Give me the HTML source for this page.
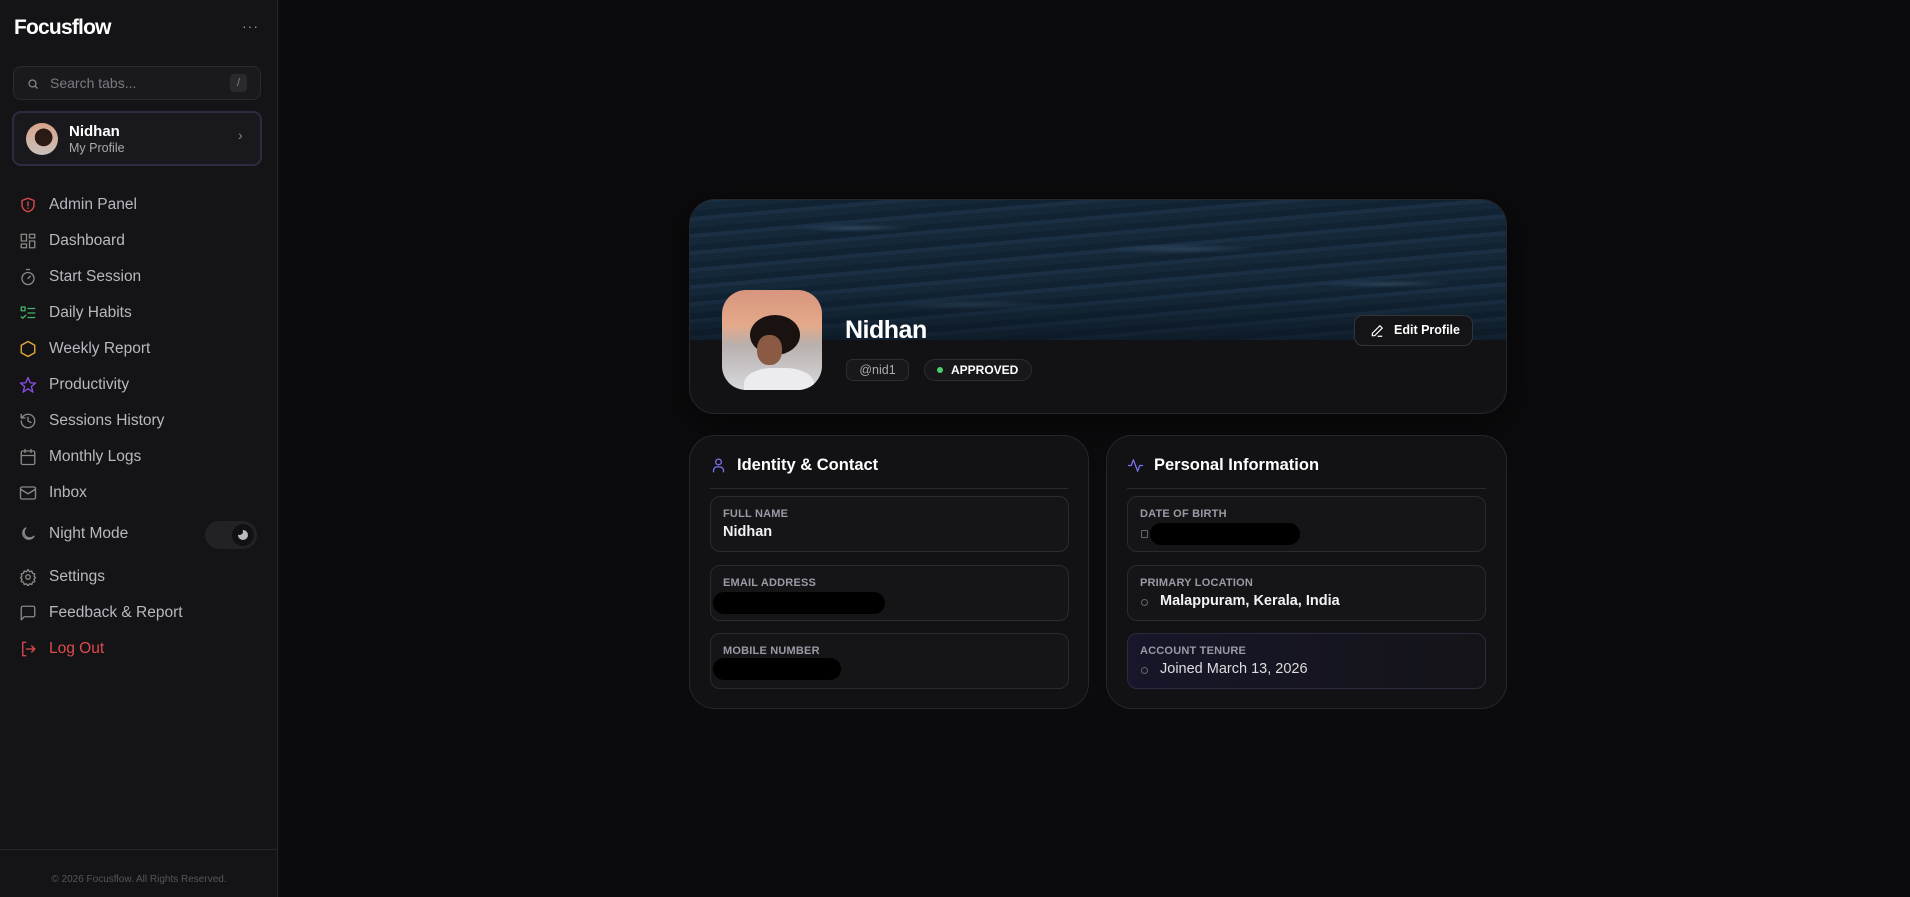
<!DOCTYPE html>
<html><head><meta charset="utf-8"><style>
*{margin:0;padding:0;box-sizing:border-box}
body{width:1910px;height:897px;background:#0b0b0d;font-family:"Liberation Sans",sans-serif;position:relative;overflow:hidden;color:#fff}
.a{position:absolute}
.sb{left:0;top:0;width:278px;height:897px;background:#141416;border-right:1px solid #25252a}
.nav{position:absolute;left:19px;height:30px;display:flex;align-items:center;font-size:15.5px;color:#b8b8c0}
.nav svg{width:18px;height:18px;margin-right:12px;fill:none;stroke-width:1.8;stroke-linecap:round;stroke-linejoin:round}
.card{position:absolute;background:#121215;border:1px solid #26262c;border-radius:26px}
.field{position:absolute;left:20px;width:359px;height:56px;background:#151518;border:1px solid #2a2a30;border-radius:10px}
.lbl{position:absolute;left:12px;top:11px;font-size:11px;font-weight:bold;color:#9a9aa6;letter-spacing:.2px}
.val{position:absolute;left:12px;top:27px;font-size:14.5px;font-weight:bold;color:#f2f2f5}
.red{position:absolute;background:#000;border-radius:12px}
.hd{position:absolute;left:20px;top:20px;display:flex;align-items:center;font-size:16.5px;font-weight:bold}
.hd svg{width:17px;height:17px;margin-right:10px;fill:none;stroke:#7b72f0;stroke-width:1.8;stroke-linecap:round;stroke-linejoin:round}
.dv{position:absolute;left:20px;right:20px;top:52px;height:1px;background:#2a2a30}
</style></head><body>
<div class="a sb">
 <div class="a" style="left:14px;top:16px;font-size:21px;font-weight:bold;letter-spacing:-.8px">Focusflow</div>
 <div class="a" style="left:242px;top:18px;color:#999;font-size:14px;letter-spacing:1px">···</div>
 <div class="a" style="left:13px;top:66px;width:248px;height:34px;background:#1a1a1d;border:1px solid #2a2a2f;border-radius:8px">
  <svg class="a" style="left:13px;top:11px" width="12" height="12" viewBox="0 0 24 24" fill="none" stroke="#888" stroke-width="2.5"><circle cx="11" cy="11" r="7"/><path d="M16 16l5 5"/></svg>
  <div class="a" style="left:36px;top:8px;font-size:14px;color:#7a7a82">Search tabs...</div>
  <div class="a" style="left:216px;top:7px;width:17px;height:18px;background:#2a2a2e;border-radius:4px;color:#888;font-size:11px;text-align:center;line-height:18px">/</div>
 </div>
 <div class="a" style="left:12px;top:111px;width:250px;height:55px;background:#19191d;border:2px solid #2c2c40;border-radius:9px">
  <div class="a" style="left:12px;top:10px;width:32px;height:32px;border-radius:50%;background:radial-gradient(circle at 55% 45%,#2a1a15 0 35%,transparent 36%),linear-gradient(#d9a38a,#c8c0bc)"></div>
  <div class="a" style="left:55px;top:10px;font-size:15px;font-weight:bold">Nidhan</div>
  <div class="a" style="left:55px;top:28px;font-size:12.5px;color:#aaa">My Profile</div>
  <div class="a" style="left:224px;top:14px;color:#888;font-size:14px">›</div>
 </div>
 <div class="nav" style="top:190px"><svg viewBox="0 0 24 24" stroke="#e04b4b"><path d="M12 3l8 3v6c0 5-4 8-8 9-4-1-8-4-8-9V6z"/><path d="M12 8v5M12 16v.5"/></svg>Admin Panel</div>
 <div class="nav" style="top:226px"><svg viewBox="0 0 24 24" stroke="#888"><rect x="3" y="3" width="7" height="9"/><rect x="14" y="3" width="7" height="5"/><rect x="14" y="12" width="7" height="9"/><rect x="3" y="16" width="7" height="5"/></svg>Dashboard</div>
 <div class="nav" style="top:262px"><svg viewBox="0 0 24 24" stroke="#888"><circle cx="12" cy="14" r="8"/><path d="M10 2h4M12 14l3-3"/></svg>Start Session</div>
 <div class="nav" style="top:298px"><svg viewBox="0 0 24 24" stroke="#3fb46a"><rect x="3" y="4" width="5" height="5"/><path d="M3 17l2 2 4-4M12 6h9M12 12h9M12 18h9"/></svg>Daily Habits</div>
 <div class="nav" style="top:334px"><svg viewBox="0 0 24 24" stroke="#e8a93a"><path d="M12 2l9 5v10l-9 5-9-5V7z"/></svg>Weekly Report</div>
 <div class="nav" style="top:370px"><svg viewBox="0 0 24 24" stroke="#8c4ee8"><path d="M12 2l3 7 7 .5-5.5 4.5 2 7.5L12 17l-6.5 4.5 2-7.5L2 9.5 9 9z"/></svg>Productivity</div>
 <div class="nav" style="top:406px"><svg viewBox="0 0 24 24" stroke="#888"><path d="M3 12a9 9 0 1 0 3-6.7L3 8M3 3v5h5M12 7v5l4 2"/></svg>Sessions History</div>
 <div class="nav" style="top:442px"><svg viewBox="0 0 24 24" stroke="#888"><rect x="3" y="4" width="18" height="18" rx="2"/><path d="M16 2v4M8 2v4M3 10h18"/></svg>Monthly Logs</div>
 <div class="nav" style="top:478px"><svg viewBox="0 0 24 24" stroke="#888"><rect x="2" y="4" width="20" height="16" rx="2"/><path d="M22 7l-10 6L2 7"/></svg>Inbox</div>
 <div class="nav" style="top:519px"><svg viewBox="0 0 24 24" stroke="#888"><path d="M20 15A8 8 0 1 1 9 4a7 7 0 0 0 11 11z"/></svg>Night Mode</div>
 <div class="a" style="left:205px;top:521px;width:52px;height:28px;border-radius:14px;background:#222226"><div class="a" style="left:27px;top:3px;width:22px;height:22px;border-radius:50%;background:#111114"><div class="a" style="left:6px;top:6px;width:10px;height:10px;border-radius:50%;background:#bbb"></div><div class="a" style="left:4px;top:4px;width:7px;height:7px;border-radius:50%;background:#111114"></div></div></div>
 <div class="nav" style="top:562px"><svg viewBox="0 0 24 24" stroke="#888"><circle cx="12" cy="12" r="3"/><path d="M12 2l2 3 3-1 1 3 3 1-1 3 2 2-2 2 1 3-3 1-1 3-3-1-2 3-2-3-3 1-1-3-3-1 1-3-2-2 2-2-1-3 3-1 1-3 3 1z"/></svg>Settings</div>
 <div class="nav" style="top:598px"><svg viewBox="0 0 24 24" stroke="#888"><path d="M21 15a2 2 0 0 1-2 2H7l-4 4V5a2 2 0 0 1 2-2h14a2 2 0 0 1 2 2z"/></svg>Feedback &amp; Report</div>
 <div class="nav" style="top:634px;color:#e04b4b"><svg viewBox="0 0 24 24" stroke="#e04b4b"><path d="M9 3H5v18h4M10 12h11M17 8l4 4-4 4"/></svg>Log Out</div>
 <div class="a" style="left:0;top:849px;width:278px;height:1px;background:#25252a"></div>
 <div class="a" style="left:0;top:874px;width:278px;text-align:center;font-size:10px;color:#55555c">© 2026 Focusflow. All Rights Reserved.</div>
</div>

<div class="card" style="left:689px;top:199px;width:818px;height:215px;overflow:hidden;box-shadow:0 10px 40px rgba(0,0,0,.5)">
 <div class="a" style="left:0;top:0;width:818px;height:140px;background:
  radial-gradient(ellipse 60px 4px at 20% 20%,rgba(90,120,150,.35),transparent),
  radial-gradient(ellipse 80px 5px at 60% 35%,rgba(90,120,150,.3),transparent),
  radial-gradient(ellipse 70px 4px at 85% 60%,rgba(90,120,150,.3),transparent),
  radial-gradient(ellipse 90px 5px at 35% 75%,rgba(90,120,150,.25),transparent),
  repeating-linear-gradient(175deg,#1a2f44 0 4px,#152839 4px 11px,#112233 11px 17px),#14283a"></div>
 <div class="a" style="left:0;top:90px;width:818px;height:50px;background:linear-gradient(transparent,rgba(10,20,30,.55))"></div>
</div>
<div class="a" style="left:722px;top:290px;width:100px;height:100px;border-radius:24px;overflow:hidden;background:linear-gradient(#d7957d 0%,#e5a98a 35%,#b8b0ad 55%,#d8d8dc 100%)">
 <div class="a" style="left:28px;top:25px;width:50px;height:40px;border-radius:50%;background:#1a1210"></div>
 <div class="a" style="left:35px;top:45px;width:25px;height:30px;border-radius:45%;background:#8a5a44"></div>
 <div class="a" style="left:22px;top:78px;width:70px;height:40px;border-radius:40%;background:#ecebee"></div>
</div>
<div class="a" style="left:845px;top:316px;font-size:25px;font-weight:bold;letter-spacing:-.5px">Nidhan</div>
<div class="a" style="left:846px;top:359px;width:63px;height:22px;border:1px solid #2c2c32;background:#18181c;border-radius:7px;font-size:12.5px;color:#aaa;text-align:center;line-height:20px">@nid1</div>
<div class="a" style="left:924px;top:359px;width:108px;height:22px;border:1px solid #2c2c32;background:#18181c;border-radius:11px;font-size:12px;font-weight:bold;line-height:20px;padding-left:26px">APPROVED<div class="a" style="left:12px;top:7px;width:6px;height:6px;border-radius:50%;background:#4ccf6c"></div></div>
<div class="a" style="left:1354px;top:315px;width:119px;height:31px;border:1px solid #34343a;background:#141417;border-radius:9px;font-size:12.5px;font-weight:bold;line-height:29px;padding-left:39px">Edit Profile
 <svg class="a" style="left:15px;top:8px" width="14" height="14" viewBox="0 0 24 24" fill="none" stroke="#fff" stroke-width="2"><path d="M17 3l4 4L8 20H4v-4zM13 21h8"/></svg></div>

<div class="card" style="left:689px;top:435px;width:400px;height:274px">
 <div class="hd"><svg viewBox="0 0 24 24"><circle cx="12" cy="7" r="4"/><path d="M5 21v-2a5 5 0 0 1 5-5h4a5 5 0 0 1 5 5v2"/></svg>Identity &amp; Contact</div>
 <div class="dv"></div>
 <div class="field" style="top:60px"><div class="lbl">FULL NAME</div><div class="val">Nidhan</div></div>
 <div class="field" style="top:129px"><div class="lbl">EMAIL ADDRESS</div><div class="red" style="left:2px;top:26px;width:172px;height:22px"></div></div>
 <div class="field" style="top:197px"><div class="lbl">MOBILE NUMBER</div><div class="red" style="left:2px;top:24px;width:128px;height:22px"></div></div>
</div>
<div class="card" style="left:1106px;top:435px;width:401px;height:274px">
 <div class="hd"><svg viewBox="0 0 24 24"><path d="M2 12h4l3-8 6 16 3-8h4"/></svg>Personal Information</div>
 <div class="dv"></div>
 <div class="field" style="top:60px"><div class="lbl">DATE OF BIRTH</div><div class="a" style="left:13px;top:33px;width:7px;height:8px;border:1px solid #666;border-radius:1px"></div><div class="red" style="left:22px;top:26px;width:150px;height:22px"></div></div>
 <div class="field" style="top:129px"><div class="lbl">PRIMARY LOCATION</div><div class="a" style="left:13px;top:33px;width:7px;height:7px;border:1px solid #666;border-radius:50%"></div><div class="val" style="left:32px">Malappuram, Kerala, India</div></div>
 <div class="field" style="top:197px;background:linear-gradient(90deg,#17162a,#141418);border-color:#2c2b40"><div class="lbl">ACCOUNT TENURE</div><div class="a" style="left:13px;top:33px;width:7px;height:7px;border:1px solid #666;border-radius:50%"></div><div class="val" style="left:32px;font-weight:normal;color:#ddd">Joined March 13, 2026</div></div>
</div>
</body></html>
